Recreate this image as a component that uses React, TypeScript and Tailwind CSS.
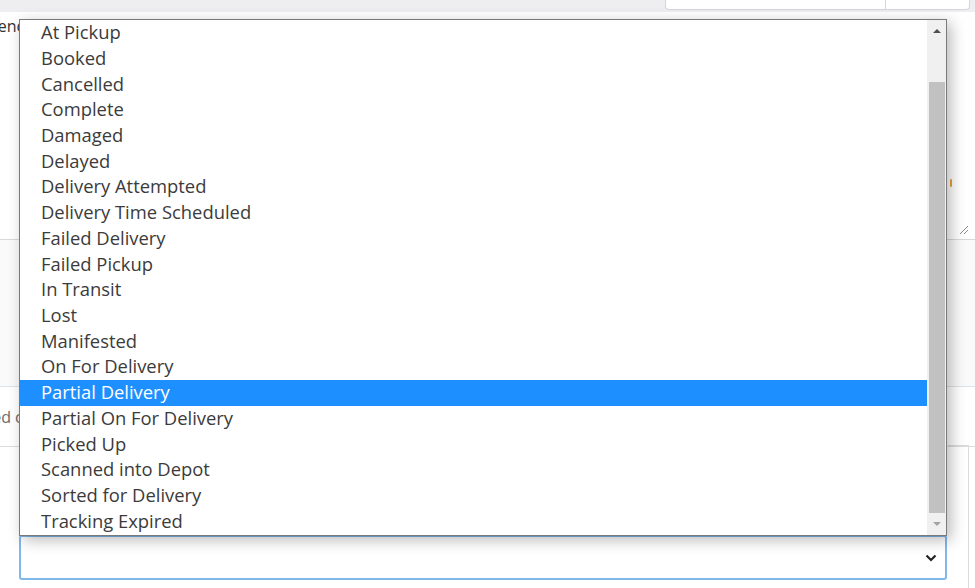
import React from "react";

const statuses = [
  "At Pickup",
  "Booked",
  "Cancelled",
  "Complete",
  "Damaged",
  "Delayed",
  "Delivery Attempted",
  "Delivery Time Scheduled",
  "Failed Delivery",
  "Failed Pickup",
  "In Transit",
  "Lost",
  "Manifested",
  "On For Delivery",
  "Partial Delivery",
  "Partial On For Delivery",
  "Picked Up",
  "Scanned into Depot",
  "Sorted for Delivery",
  "Tracking Expired",
];

function StatusList({ selected }: { selected: string }) {
  return (
    <div className="absolute left-[19px] top-[19px] z-20 flex h-[517px] w-[928px] border border-[#7a7a7a] bg-white shadow-[4px_4px_14px_rgba(0,0,0,0.28)]">
      <ul className="flex-1 overflow-hidden">
        {statuses.map((s) => (
          <li
            key={s}
            className={
              s === selected
                ? "flex h-[25.73px] items-center bg-[#1e8fff] pb-[2px] pl-[21px] text-[18.4px] text-white"
                : "flex h-[25.73px] items-center pb-[2px] pl-[21px] text-[18.4px] text-[#3b3b3b]"
            }
          >
            {s}
          </li>
        ))}
      </ul>
      <div className="flex w-[19px] flex-col items-center bg-[#f0f0f0]">
        <div className="flex h-[22px] items-center justify-center">
          <div className="h-0 w-0 border-x-[4px] border-b-[4px] border-x-transparent border-b-[#505050]" />
        </div>
        <div className="mt-[40px] h-[431px] w-[16px] bg-[#c1c1c1]" />
        <div className="flex flex-1 items-center justify-center">
          <div className="h-0 w-0 border-x-[4px] border-t-[4px] border-x-transparent border-t-[#a3a3a3]" />
        </div>
      </div>
    </div>
  );
}

export default function App() {
  return (
    <div className="relative h-[588px] w-[975px] overflow-hidden bg-white font-['Open_Sans',sans-serif]">
      {/* top toolbar strip */}
      <div className="flex h-[12px] justify-end bg-[#eeeef1] pr-[5px]">
        <div className="flex h-[10px] w-[305px] rounded-b-[4px] border border-t-0 border-[#d6d6da] bg-white">
          <div className="w-[220px] border-r border-[#d6d6da]" />
        </div>
      </div>

      {/* notes section */}
      <div className="relative flex h-[228px] border-b border-[#d9d9dc] bg-white">
        <div className="ml-[-42px] mt-[2px] text-[16px] text-[#333]">Reference</div>
        <div className="ml-auto mr-[6px] flex flex-col items-end justify-end pb-[4px]">
          <div className="mb-[38px] mr-[17px] h-[8px] w-[2px] rounded bg-[#e8a33d]" />
          <svg width="10" height="10" viewBox="0 0 10 10">
            <path d="M9 1L1 9M9 5L5 9" stroke="#8a8a8a" strokeWidth="1" />
          </svg>
        </div>
      </div>

      {/* details section */}
      <div className="h-[147px] border-b border-[#dde3ea] bg-[#fafafa]" />

      <div className="flex h-[60px] items-center border-b border-[#dcdcdc] bg-white">
        <span className="ml-[-52px] text-[16px] text-[#6a6a6a]">Selected carrier</span>
      </div>

      {/* status select */}
      <div className="flex h-[141px] bg-white pl-[19px]">
        <div className="mt-[88px] flex h-[45px] w-[928px] items-center justify-end rounded-[3px] border-2 border-[#80b8ec] pr-[8px]">
          <svg width="12" height="8" viewBox="0 0 12 8">
            <path d="M1.5 1.5L6 6L10.5 1.5" fill="none" stroke="#222" strokeWidth="2.2" />
          </svg>
        </div>
        <div className="ml-[1px] mt-[-2px] h-[160px] w-[21px] border-r border-t border-[#dcdcdc]" />
      </div>

      <StatusList selected="Partial Delivery" />
    </div>
  );
}
